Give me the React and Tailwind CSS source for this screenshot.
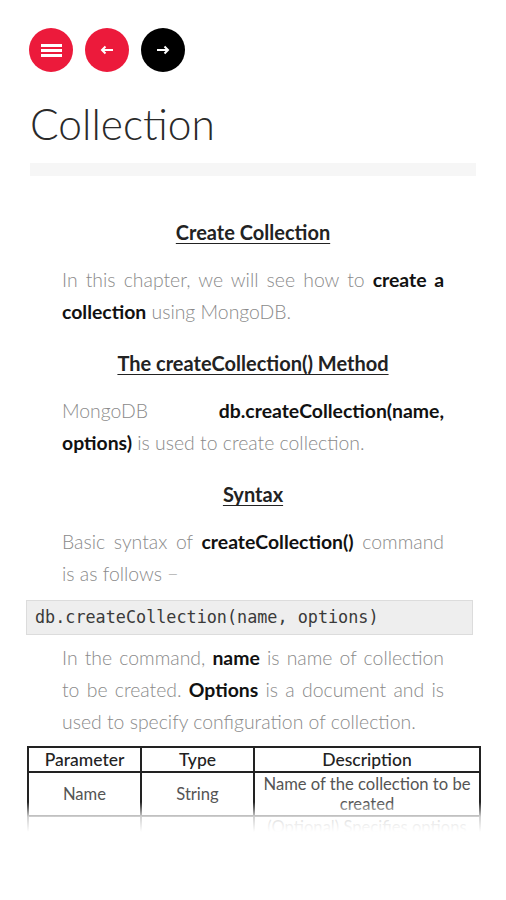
import React from "react";

const P = ({ children, className = "" }) => (
  <p className={`mx-[62px] text-[19.4px] leading-[32px] text-[#8a8a8a] font-light text-justify ${className}`}>
    {children}
  </p>
);

const B = ({ children }) => <b className="font-bold text-[#111]">{children}</b>;

const H = ({ children, className = "" }) => (
  <h2 className={`text-center text-[20px] leading-[32px] font-bold text-[#222] underline underline-offset-[3px] decoration-[1px] ${className}`}>
    {children}
  </h2>
);

export default function App() {
  return (
    <div className="w-[506px] h-[900px] bg-white relative overflow-hidden" style={{ fontFamily: "Lato, 'Open Sans', sans-serif" }}>
      <div className="flex gap-[12px] pl-[29px] pt-[28px]">
        <button className="w-[44px] h-[44px] rounded-full bg-[#ec1a3b] flex flex-col items-center justify-center gap-[2px]">
          <span className="block w-[21px] h-[3px] bg-white"></span>
          <span className="block w-[21px] h-[3px] bg-white"></span>
          <span className="block w-[21px] h-[3px] bg-white"></span>
        </button>
        <button className="w-[44px] h-[44px] rounded-full bg-[#ec1a3b] flex items-center justify-center">
          <svg width="14" height="10" viewBox="0 0 14 10" fill="none" stroke="white" strokeWidth="2">
            <path d="M13 5H2M5.5 1.5L2 5l3.5 3.5" />
          </svg>
        </button>
        <button className="w-[44px] h-[44px] rounded-full bg-black flex items-center justify-center">
          <svg width="14" height="10" viewBox="0 0 14 10" fill="none" stroke="white" strokeWidth="2">
            <path d="M1 5h11M8.5 1.5L12 5l-3.5 3.5" />
          </svg>
        </button>
      </div>

      <h1 className="ml-[30px] mt-[24px] text-[42.5px] leading-[56px] font-light text-[#2a2a2a]">Collection</h1>

      <div className="mx-[30px] mt-[11px] h-[13px] bg-[#f6f6f6]"></div>

      <div className="relative h-[656px] overflow-hidden">
        <H className="mt-[40px]">Create Collection</H>
        <P className="mt-[16px]">
          In this chapter, we will see how to <B>create a collection</B> using MongoDB.
        </P>
        <H className="mt-[19px]">The createCollection() Method</H>
        <P className="mt-[16px]">
          MongoDB <B>db.createCollection(name, options)</B> is used to create collection.
        </P>
        <H className="mt-[19px]">Syntax</H>
        <P className="mt-[16px]">
          Basic syntax of <B>createCollection()</B> command is as follows −
        </P>
        <div className="mx-[26px] mt-[10px] w-[447px] h-[35px] bg-[#eeeeee] border border-[#dcdcdc] pl-[8px] flex items-center text-[16.8px] text-[#3a3a3a]" style={{ fontFamily: "'DejaVu Sans Mono', monospace" }}>
          db.createCollection(name, options)
        </div>
        <P className="mt-[7px]">
          In the command, <B>name</B> is name of collection to be created. <B>Options</B> is a document and is used to specify configuration of collection.
        </P>
        <table className="ml-[27px] mt-[8px] w-[454px] border-collapse border-2 border-[#222] leading-[20px] table-fixed">
          <colgroup>
            <col className="w-[113px]" />
            <col className="w-[113px]" />
            <col />
          </colgroup>
          <thead>
            <tr>
              <th className="border-2 border-[#222] font-medium text-[17.5px] text-[#222] h-[25px] py-0">Parameter</th>
              <th className="border-2 border-[#222] font-medium text-[17.5px] text-[#222] py-0">Type</th>
              <th className="border-2 border-[#222] font-medium text-[17.5px] text-[#222] py-0">Description</th>
            </tr>
          </thead>
          <tbody className="text-[#555] text-center text-[16.6px]">
            <tr>
              <td className="border-2 border-[#222] h-[44px] py-0">Name</td>
              <td className="border-2 border-[#222] py-0">String</td>
              <td className="border-2 border-[#222] py-0 px-1">Name of the collection to be created</td>
            </tr>
            <tr>
              <td className="border-2 border-[#222] h-[64px]">Options</td>
              <td className="border-2 border-[#222]">Document</td>
              <td className="border-2 border-[#222] px-1 align-top">(Optional) Specifies options about memory size and indexing</td>
            </tr>
          </tbody>
        </table>
        <div className="absolute left-0 right-0 bottom-0 h-[30px] bg-gradient-to-b from-white/0 via-white/80 to-white"></div>
      </div>
    </div>
  );
}
